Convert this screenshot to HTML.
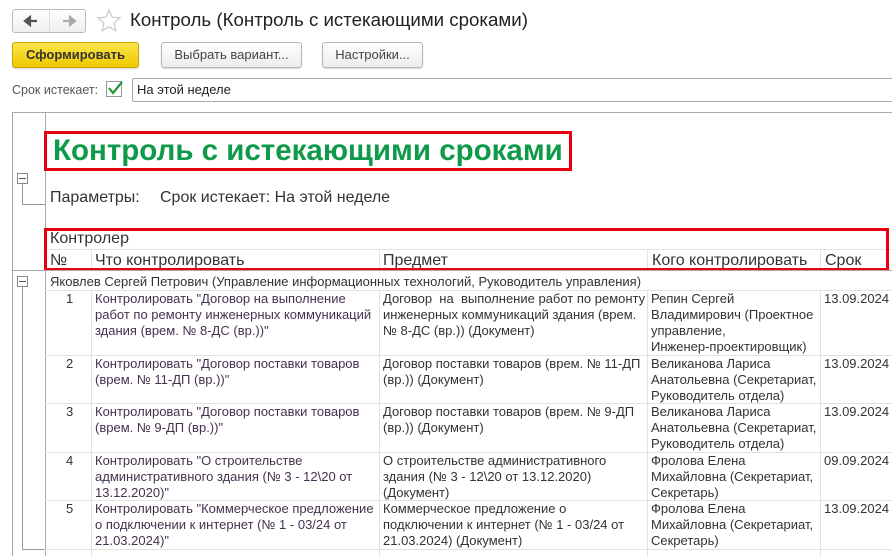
<!DOCTYPE html>
<html><head><meta charset="utf-8"><style>
*{margin:0;padding:0;box-sizing:border-box}
body{width:892px;height:556px;overflow:hidden;background:#fff;font-family:"Liberation Sans",Arial,sans-serif;position:relative;color:#333}
.a{position:absolute}
.btn{position:absolute;height:26px;border:1px solid #b5b5b5;border-radius:3px;background:linear-gradient(#fff,#ececec);font-size:13px;color:#444;text-align:center;line-height:24px;box-shadow:0 1px 1px rgba(0,0,0,.15)}
.hl{position:absolute;height:1px;background:#e2e2e2}
.vl{position:absolute;width:1px;background:#e2e2e2}
.c{position:absolute;font-size:13px;line-height:16px;white-space:nowrap}
.h{position:absolute;font-size:16px;white-space:nowrap}
.p{color:#45324f}
</style></head><body>
<div class="a" style="left:12px;top:9px;width:74px;height:24px;border:1px solid #bbb;border-radius:3px;background:linear-gradient(#fff,#efefef)"></div>
<div class="a" style="left:49px;top:10px;width:1px;height:22px;background:#ddd"></div>
<svg class="a" style="left:22px;top:14px" width="60" height="14"><path d="M3 7h12M3 7l5-4v8z" stroke="#555" stroke-width="2.2" fill="#555"/><path d="M41 7h12M53 7l-5-4v8z" stroke="#aaa" stroke-width="2.2" fill="#aaa"/></svg>
<svg class="a" style="left:96px;top:8px" width="26" height="26"><path d="M13 2l3.2 7.2 7.8.7-5.9 5.2 1.8 7.7L13 18.8 6.1 22.8l1.8-7.7L2 9.9l7.8-.7z" fill="none" stroke="#c8c8c8" stroke-width="1.2"/></svg>
<div class="a" style="left:130px;top:9px;font-size:18.7px;color:#222">Контроль (Контроль с истекающими сроками)</div>
<div class="btn" style="left:12px;top:42px;width:127px;background:linear-gradient(#fbe44a,#efca00);border-color:#c9a800;color:#333;font-weight:bold">Сформировать</div>
<div class="btn" style="left:161px;top:42px;width:141px">Выбрать вариант...</div>
<div class="btn" style="left:322px;top:42px;width:101px">Настройки...</div>
<div class="a" style="left:12px;top:83px;font-size:12.5px;color:#555">Срок истекает:</div>
<div class="a" style="left:106px;top:81px;width:16px;height:16px;border:1px solid #999;background:#fff"></div>
<svg class="a" style="left:106px;top:79px" width="18" height="18"><path d="M3 9l4 5 9-11" fill="none" stroke="#1d9a3a" stroke-width="2.2"/></svg>
<div class="a" style="left:132px;top:78px;width:770px;height:24px;border:1px solid #aaa;border-radius:2px;font-size:13px;line-height:22px;padding-left:4px;color:#222">На этой неделе</div>
<div class="a" style="left:12px;top:112px;width:880px;height:1px;background:#aaa"></div>
<div class="a" style="left:12px;top:112px;width:1px;height:444px;background:#aaa"></div>
<div class="a" style="left:45px;top:112px;width:1px;height:444px;background:#aaa"></div>
<div class="a" style="left:17px;top:173px;width:11px;height:11px;border:1px solid #888;background:#fff"></div>
<div class="a" style="left:19px;top:178px;width:7px;height:1px;background:#555"></div>
<div class="a" style="left:22px;top:184px;width:1px;height:20px;background:#999"></div>
<div class="a" style="left:22px;top:204px;width:23px;height:1px;background:#999"></div>
<div class="a" style="left:44px;top:131px;width:528px;height:40px;border:3px solid #e8000f"></div>
<div class="a" style="left:53px;top:134px;font-size:29.5px;font-weight:bold;color:#0f9a4a;white-space:nowrap">Контроль с истекающими сроками</div>
<div class="h" style="left:50px;top:189px">Параметры:</div>
<div class="h" style="left:160px;top:189px">Срок истекает: На этой неделе</div>
<div class="hl" style="left:45px;top:249px;width:847px"></div>
<div class="h" style="left:50px;top:230px">Контролер</div>
<div class="vl" style="left:91px;top:249px;height:22px"></div>
<div class="vl" style="left:379px;top:249px;height:22px"></div>
<div class="vl" style="left:647px;top:249px;height:22px"></div>
<div class="vl" style="left:820px;top:249px;height:22px"></div>
<div class="h" style="left:50px;top:252px">№</div>
<div class="h" style="left:95px;top:252px">Что контролировать</div>
<div class="h" style="left:383px;top:252px">Предмет</div>
<div class="h" style="left:652px;top:252px">Кого контролировать</div>
<div class="h" style="left:825px;top:252px">Срок</div>
<div class="a" style="left:44px;top:228px;width:845px;height:43px;border:3px solid #e8000f"></div>
<div class="a" style="left:12px;top:270px;width:880px;height:1px;background:#aaa"></div>
<div class="a" style="left:17px;top:276px;width:11px;height:11px;border:1px solid #888;background:#fff"></div>
<div class="a" style="left:19px;top:281px;width:7px;height:1px;background:#555"></div>
<div class="a" style="left:22px;top:287px;width:1px;height:262px;background:#999"></div>
<div class="a" style="left:22px;top:549px;width:23px;height:1px;background:#999"></div>
<div class="c" style="left:50px;top:274px">Яковлев Сергей Петрович (Управление информационных технологий, Руководитель управления)</div>
<div class="hl" style="left:45px;top:290px;width:847px"></div>
<div class="hl" style="left:45px;top:355px;width:847px"></div>
<div class="hl" style="left:45px;top:403px;width:847px"></div>
<div class="hl" style="left:45px;top:452px;width:847px"></div>
<div class="hl" style="left:45px;top:500px;width:847px"></div>
<div class="hl" style="left:45px;top:549px;width:847px"></div>
<div class="vl" style="left:91px;top:290px;height:266px"></div>
<div class="vl" style="left:379px;top:290px;height:266px"></div>
<div class="vl" style="left:647px;top:290px;height:266px"></div>
<div class="vl" style="left:820px;top:290px;height:266px"></div>

<div class="c" style="left:66px;top:291px">1</div>
<div class="c p" style="left:95px;top:291px">Контролировать "Договор на выполнение<br>работ по ремонту инженерных коммуникаций<br>здания (врем. № 8-ДС (вр.))"</div>
<div class="c" style="left:383px;top:291px">Договор &nbsp;на &nbsp;выполнение работ по ремонту<br>инженерных коммуникаций здания (врем.<br>№ 8-ДС (вр.)) (Документ)</div>
<div class="c" style="left:651px;top:291px">Репин Сергей<br>Владимирович (Проектное<br>управление,<br>Инженер-проектировщик)</div>
<div class="c" style="left:824px;top:291px">13.09.2024</div>

<div class="c" style="left:66px;top:356px">2</div>
<div class="c p" style="left:95px;top:356px">Контролировать "Договор поставки товаров<br>(врем. № 11-ДП (вр.))"</div>
<div class="c" style="left:383px;top:356px">Договор поставки товаров (врем. № 11-ДП<br>(вр.)) (Документ)</div>
<div class="c" style="left:651px;top:356px">Великанова Лариса<br>Анатольевна (Секретариат,<br>Руководитель отдела)</div>
<div class="c" style="left:824px;top:356px">13.09.2024</div>

<div class="c" style="left:66px;top:404px">3</div>
<div class="c p" style="left:95px;top:404px">Контролировать "Договор поставки товаров<br>(врем. № 9-ДП (вр.))"</div>
<div class="c" style="left:383px;top:404px">Договор поставки товаров (врем. № 9-ДП<br>(вр.)) (Документ)</div>
<div class="c" style="left:651px;top:404px">Великанова Лариса<br>Анатольевна (Секретариат,<br>Руководитель отдела)</div>
<div class="c" style="left:824px;top:404px">13.09.2024</div>

<div class="c" style="left:66px;top:453px">4</div>
<div class="c p" style="left:95px;top:453px">Контролировать "О строительстве<br>административного здания (№ 3 - 12\20 от<br>13.12.2020)"</div>
<div class="c" style="left:383px;top:453px">О строительстве административного<br>здания (№ 3 - 12\20 от 13.12.2020)<br>(Документ)</div>
<div class="c" style="left:651px;top:453px">Фролова Елена<br>Михайловна (Секретариат,<br>Секретарь)</div>
<div class="c" style="left:824px;top:453px">09.09.2024</div>

<div class="c" style="left:66px;top:501px">5</div>
<div class="c p" style="left:95px;top:501px">Контролировать "Коммерческое предложение<br>о подключении к интернет (№ 1 - 03/24 от<br>21.03.2024)"</div>
<div class="c" style="left:383px;top:501px">Коммерческое предложение о<br>подключении к интернет (№ 1 - 03/24 от<br>21.03.2024) (Документ)</div>
<div class="c" style="left:651px;top:501px">Фролова Елена<br>Михайловна (Секретариат,<br>Секретарь)</div>
<div class="c" style="left:824px;top:501px">13.09.2024</div>
</body></html>
